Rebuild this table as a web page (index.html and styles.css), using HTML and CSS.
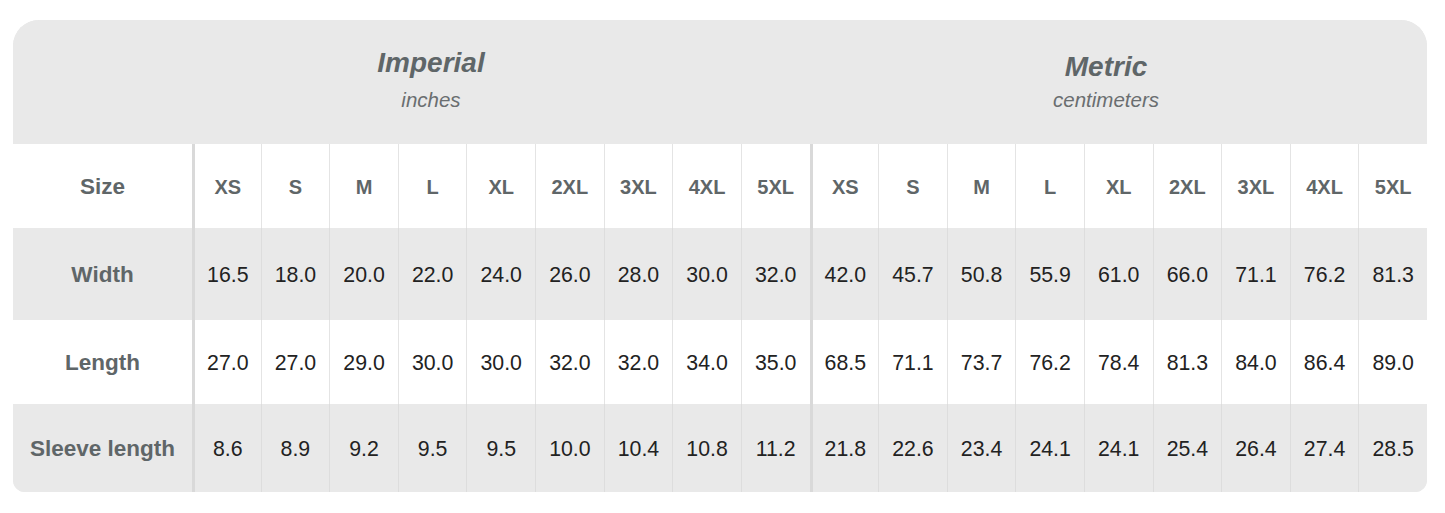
FILE: index.html
```html
<!DOCTYPE html>
<html lang="en">
<head>
<meta charset="utf-8">
<title>Size chart</title>
<link rel="stylesheet" href="styles.css">
</head>
<body>
<div class="chart">
  <div class="head">
    <div class="group group--imperial">
      <div class="group-title">Imperial</div>
      <div class="group-sub">inches</div>
    </div>
    <div class="group group--metric">
      <div class="group-title">Metric</div>
      <div class="group-sub">centimeters</div>
    </div>
  </div>

  <div class="row row--white row--sizes">
    <div class="label">Size</div>
    <div class="cell start size">XS</div><div class="cell size">S</div><div class="cell size">M</div><div class="cell size">L</div><div class="cell size">XL</div><div class="cell size">2XL</div><div class="cell size">3XL</div><div class="cell size">4XL</div><div class="cell size">5XL</div>
    <div class="cell start size">XS</div><div class="cell size">S</div><div class="cell size">M</div><div class="cell size">L</div><div class="cell size">XL</div><div class="cell size">2XL</div><div class="cell size">3XL</div><div class="cell size">4XL</div><div class="cell size">5XL</div>
  </div>

  <div class="row row--grey row--width">
    <div class="label">Width</div>
    <div class="cell start">16.5</div><div class="cell">18.0</div><div class="cell">20.0</div><div class="cell">22.0</div><div class="cell">24.0</div><div class="cell">26.0</div><div class="cell">28.0</div><div class="cell">30.0</div><div class="cell">32.0</div>
    <div class="cell start">42.0</div><div class="cell">45.7</div><div class="cell">50.8</div><div class="cell">55.9</div><div class="cell">61.0</div><div class="cell">66.0</div><div class="cell">71.1</div><div class="cell">76.2</div><div class="cell">81.3</div>
  </div>

  <div class="row row--white row--length">
    <div class="label">Length</div>
    <div class="cell start">27.0</div><div class="cell">27.0</div><div class="cell">29.0</div><div class="cell">30.0</div><div class="cell">30.0</div><div class="cell">32.0</div><div class="cell">32.0</div><div class="cell">34.0</div><div class="cell">35.0</div>
    <div class="cell start">68.5</div><div class="cell">71.1</div><div class="cell">73.7</div><div class="cell">76.2</div><div class="cell">78.4</div><div class="cell">81.3</div><div class="cell">84.0</div><div class="cell">86.4</div><div class="cell">89.0</div>
  </div>

  <div class="row row--grey row--sleeve">
    <div class="label">Sleeve length</div>
    <div class="cell start">8.6</div><div class="cell">8.9</div><div class="cell">9.2</div><div class="cell">9.5</div><div class="cell">9.5</div><div class="cell">10.0</div><div class="cell">10.4</div><div class="cell">10.8</div><div class="cell">11.2</div>
    <div class="cell start">21.8</div><div class="cell">22.6</div><div class="cell">23.4</div><div class="cell">24.1</div><div class="cell">24.1</div><div class="cell">25.4</div><div class="cell">26.4</div><div class="cell">27.4</div><div class="cell">28.5</div>
  </div>
</div>
</body>
</html>
```

FILE: styles.css
```css
* { box-sizing: border-box; }

html, body {
  margin: 0;
  background: #ffffff;
}

body {
  padding: 20px 18px 0 13px;
  font-family: "Liberation Sans", Arial, Helvetica, sans-serif;
}

.chart {
  width: 1414px;
  display: flex;
  flex-direction: column;
  background: #e9e9e9;
  border-radius: 26px 26px 12px 12px;
  overflow: hidden;
}

.head {
  height: 124px;
  display: grid;
  grid-template-columns: 318px 200px 475px 200px 1fr;
  padding-top: 27px;
  background: #e9e9e9;
}

.group {
  display: flex;
  flex-direction: column;
  align-items: center;
}

.group--imperial { grid-column: 2; }
.group--metric { grid-column: 4; }

.group-title {
  font-size: 28px;
  line-height: 32px;
  font-weight: bold;
  font-style: italic;
  color: #5f6668;
  margin-bottom: 9px;
}

.group--metric .group-title {
  margin-top: 4px;
  margin-bottom: 5px;
}

.group-sub {
  font-size: 20.5px;
  line-height: 24px;
  font-style: italic;
  color: #6a6e70;
}

.row {
  display: grid;
  grid-template-columns: 179px repeat(18, 1fr);
}

.row--white { background: #ffffff; }
.row--grey { background: #e9e9e9; }

.row--sizes { height: 84px; }
.row--width { height: 92px; }
.row--length { height: 84px; }
.row--sleeve { height: 88px; }

.label {
  display: flex;
  align-items: center;
  justify-content: center;
  padding-top: 2px;
  font-size: 22.5px;
  font-weight: bold;
  color: #5f6668;
  white-space: nowrap;
}

.cell {
  display: flex;
  align-items: center;
  justify-content: center;
  padding-top: 2px;
  border-left: 1px solid #e4e4e4;
  font-size: 21.3px;
  color: #222222;
  white-space: nowrap;
}

.row--grey .cell { border-left-color: #dddddd; }

.cell.start,
.row--grey .cell.start {
  border-left: 3px solid #d9d9d9;
}

.cell.size {
  font-size: 20px;
  font-weight: bold;
  color: #5f6668;
}
```
